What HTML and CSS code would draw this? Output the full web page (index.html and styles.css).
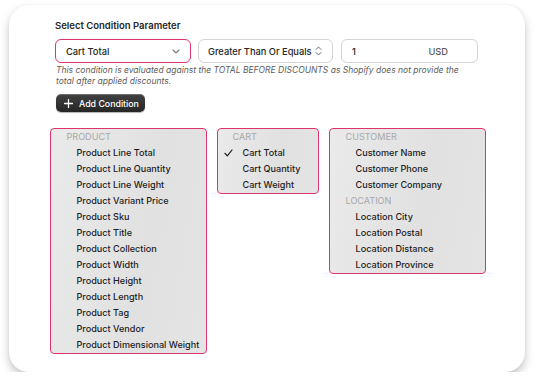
FILE: index.html
```html
<!DOCTYPE html>
<html lang="en">
<head>
  <meta charset="UTF-8">
  <title>Select Condition Parameter</title>
  <link rel="stylesheet" href="styles.css">
</head>
<body>

  <div class="card">
    <div class="title">Select Condition Parameter</div>

    <div class="fields">
      <div class="field field-active">
        <span>Cart Total</span>
        <svg class="chev" width="8" height="5" viewBox="0 0 8 5"><path d="M1 1l3 3 3-3" fill="none" stroke="#7a7a7a" stroke-width="1.1" stroke-linecap="round" stroke-linejoin="round"/></svg>
      </div>
      <div class="field field-op">
        <span>Greater Than Or Equals</span>
        <svg class="chev" width="7" height="10" viewBox="0 0 7 10"><path d="M1 3.5l2.5-2.5 2.5 2.5M1 6.5l2.5 2.5 2.5-2.5" fill="none" stroke="#6a6a6a" stroke-width="1" stroke-linecap="round" stroke-linejoin="round"/></svg>
      </div>
      <div class="field field-value">
        <span>1</span>
        <span class="suffix">USD</span>
      </div>
    </div>

    <p class="help">This condition is evaluated against the TOTAL BEFORE DISCOUNTS as Shopify does not provide the total after applied discounts.</p>

    <button class="add-btn">
      <svg width="9" height="9" viewBox="0 0 9 9"><path d="M4.5 0.5v8M0.5 4.5h8" stroke="#fff" stroke-width="1.3" stroke-linecap="round"/></svg>
      Add Condition
    </button>

    <div class="menus">
      <ul class="menu menu-product">
        <li class="group">PRODUCT</li>
        <li class="item">Product Line Total</li>
        <li class="item">Product Line Quantity</li>
        <li class="item">Product Line Weight</li>
        <li class="item">Product Variant Price</li>
        <li class="item">Product Sku</li>
        <li class="item">Product Title</li>
        <li class="item">Product Collection</li>
        <li class="item">Product Width</li>
        <li class="item">Product Height</li>
        <li class="item">Product Length</li>
        <li class="item">Product Tag</li>
        <li class="item">Product Vendor</li>
        <li class="item">Product Dimensional Weight</li>
      </ul>

      <ul class="menu menu-cart">
        <li class="group">CART</li>
        <li class="item">
          <svg class="mark" width="9" height="8" viewBox="0 0 9 8"><path d="M1 4.3l2.3 2.6L8 1" fill="none" stroke="#1a1a1a" stroke-width="1.2" stroke-linecap="round" stroke-linejoin="round"/></svg>
          Cart Total
        </li>
        <li class="item">Cart Quantity</li>
        <li class="item">Cart Weight</li>
      </ul>

      <ul class="menu menu-customer">
        <li class="group">CUSTOMER</li>
        <li class="item">Customer Name</li>
        <li class="item">Customer Phone</li>
        <li class="item">Customer Company</li>
        <li class="group">LOCATION</li>
        <li class="item">Location City</li>
        <li class="item">Location Postal</li>
        <li class="item">Location Distance</li>
        <li class="item">Location Province</li>
      </ul>
    </div>
  </div>

</body>
</html>
```

FILE: styles.css
```css
* {
  box-sizing: border-box;
}

body {
  margin: 0;
  background: #ffffff;
  font-family: Inter, "Noto Sans", sans-serif;
  color: #303030;
}

.card {
  width: 516px;
  height: 367px;
  margin: 5px 0 0 9px;
  padding: 14px 0 0 46px;
  background: #ffffff;
  border-radius: 20px;
  box-shadow: 0 5px 10px rgba(0, 0, 0, 0.22), 0 0 3px rgba(0, 0, 0, 0.05);
}

.title {
  font-size: 9.5px;
  font-weight: 600;
  line-height: 14px;
  color: #262626;
}

.fields {
  display: flex;
  gap: 7px;
  margin-top: 6px;
}

.field {
  display: flex;
  align-items: center;
  justify-content: space-between;
  height: 24px;
  padding: 0 9px 0 10px;
  border: 1px solid #d4d4d4;
  border-radius: 6px;
  font-size: 9.3px;
  font-weight: 500;
  color: #262626;
}

.field-active {
  width: 136px;
  border: 1.5px solid #e0336b;
  padding-right: 10px;
}

.field-op {
  width: 135px;
  padding: 0 10px 0 9px;
}

.field-value {
  width: 137px;
  margin-left: 1px;
  padding-right: 29px;
}

.suffix {
  color: #5a5a5a;
}

.help {
  width: 410px;
  margin: 2px 0 0 1px;
  font-size: 8.5px;
  line-height: 11px;
  font-style: italic;
  color: #5c5c5c;
}

.add-btn {
  display: flex;
  align-items: center;
  gap: 6px;
  height: 18px;
  width: 89px;
  margin-top: 7px;
  margin-left: 1px;
  padding: 0 0 0 8px;
  border: none;
  border-radius: 5px;
  background: linear-gradient(#414141, #262626);
  box-shadow: inset 0 1px 0 rgba(255, 255, 255, 0.25), 0 1px 1px rgba(0, 0, 0, 0.3);
  font-family: inherit;
  font-size: 8.8px;
  font-weight: 500;
  color: #ffffff;
}

.menus {
  display: flex;
  align-items: flex-start;
  gap: 10px;
  margin: 16px 0 0 -5px;
}

.menu {
  list-style: none;
  margin: 0;
  padding: 0;
  border: 1.5px solid #e0336b;
  border-radius: 4px;
  background: linear-gradient(100deg, #eaeaea, #e1e1e1 60%, #e4e4e4);
  font-size: 9.1px;
  font-weight: 500;
}

.menu-product {
  width: 157px;
}

.menu-cart {
  width: 102px;
}

.menu-customer {
  width: 157px;
}

.menu li {
  height: 16px;
  line-height: 16px;
  white-space: nowrap;
}

.group {
  padding-left: 15.5px;
  color: #a8a8a8;
  font-weight: 400;
}

.item {
  display: flex;
  align-items: center;
  padding-left: 25.5px;
  color: #1c1c1c;
}

.menu-cart .group {
  padding-left: 14.5px;
}

.menu-cart .item {
  padding-left: 24.5px;
}

.mark {
  margin-left: -19px;
  margin-right: 10px;
}
```
